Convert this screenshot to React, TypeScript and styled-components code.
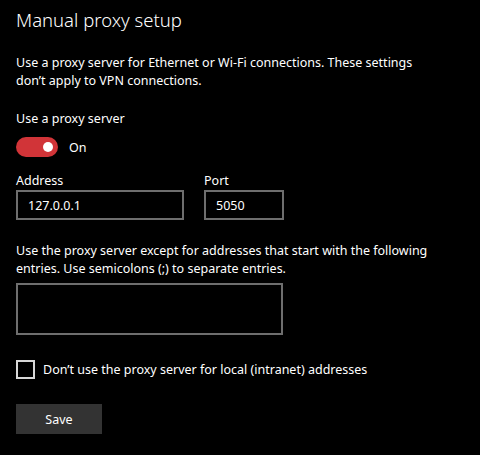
import React, { useState } from "react";
import styled, { createGlobalStyle } from "styled-components";

const Global = createGlobalStyle`
  html, body { margin: 0; padding: 0; background: #000; }
  body { font-family: "Noto Sans", "Open Sans", sans-serif; color: #fff; }
  * { box-sizing: border-box; }
`;

const Page = styled.div`
  width: 480px;
  height: 455px;
  background: #000;
  padding: 6px 16px 0 16px;
  display: flex;
  flex-direction: column;
`;

const Title = styled.h1`
  margin: 0;
  font-size: 18.5px;
  font-weight: 300;
  line-height: 28px;
  color: #fff;
`;

const Para = styled.p<{ $top: number }>`
  margin: ${(p) => p.$top}px 0 0 0;
  font-size: 12.5px;
  line-height: 18px;
  color: #fff;
`;

const Label = styled.div<{ $top?: number }>`
  margin-top: ${(p) => p.$top ?? 0}px;
  font-size: 12.5px;
  line-height: 18px;
`;

const ToggleRow = styled.div`
  display: flex;
  align-items: center;
  gap: 11px;
  margin-top: 9px;
  font-size: 12.5px;
`;

const Track = styled.div`
  width: 42px;
  height: 20px;
  border-radius: 10px;
  background: #d13438;
  position: relative;
  flex: none;
`;

const Knob = styled.div`
  position: absolute;
  top: 5px;
  right: 5px;
  width: 10px;
  height: 10px;
  border-radius: 50%;
  background: #fff;
`;

const FieldRow = styled.div`
  display: flex;
  gap: 20px;
  margin-top: 15px;
`;

const Field = styled.div`
  display: flex;
  flex-direction: column;
`;

const Box = styled.div<{ $w: number; $h: number; $top?: number }>`
  width: ${(p) => p.$w}px;
  height: ${(p) => p.$h}px;
  margin-top: ${(p) => p.$top ?? 0}px;
  border: 2px solid #6e6e6e;
  padding: 0 10px;
  display: flex;
  align-items: center;
  font-size: 12.5px;
`;

const CheckRow = styled.div`
  display: flex;
  align-items: center;
  gap: 8px;
  margin-top: 25px;
  font-size: 12.5px;
`;

const CheckBox = styled.div`
  width: 19px;
  height: 19px;
  border: 2px solid #d8d8d8;
  flex: none;
`;

const Button = styled.div`
  margin-top: 25px;
  width: 86px;
  height: 30px;
  background: #333;
  display: flex;
  align-items: center;
  justify-content: center;
  font-size: 12.5px;
`;

export default function App() {
  const [on] = useState(true);
  return (
    <>
      <Global />
      <Page>
        <Title>Manual proxy setup</Title>
        <Para $top={20}>
          Use a proxy server for Ethernet or Wi-Fi connections. These settings
          <br />
          don’t apply to VPN connections.
        </Para>
        <Label $top={20}>Use a proxy server</Label>
        <ToggleRow>
          <Track>{on && <Knob />}</Track>
          <span>On</span>
        </ToggleRow>
        <FieldRow>
          <Field>
            <Label>Address</Label>
            <Box $w={168} $h={30}>127.0.0.1</Box>
          </Field>
          <Field>
            <Label>Port</Label>
            <Box $w={80} $h={30}>5050</Box>
          </Field>
        </FieldRow>
        <Para $top={22}>
          Use the proxy server except for addresses that start with the following
          <br />
          entries. Use semicolons (;) to separate entries.
        </Para>
        <Box $w={267} $h={52} $top={5} />
        <CheckRow>
          <CheckBox />
          <span>Don’t use the proxy server for local (intranet) addresses</span>
        </CheckRow>
        <Button>Save</Button>
      </Page>
    </>
  );
}
